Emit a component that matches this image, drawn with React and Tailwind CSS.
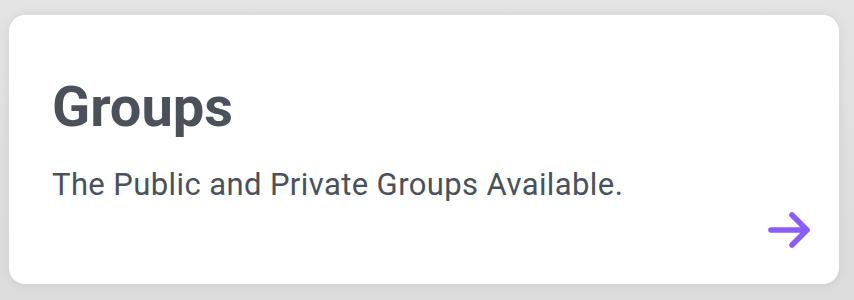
export default function App() {
  return (
    <div className="h-[300px] w-full bg-gradient-to-b from-[#e4e4e4] to-[#dcdcdc] pt-[15px] pl-[9px] pr-[15px] font-['Roboto',sans-serif]">
      <div className="h-[269px] w-[830px] rounded-2xl bg-white shadow-[0_0_12px_rgba(0,0,0,0.08)] flex flex-col pl-[43px] pr-[26px] pt-[64px] pb-[30px]">
        <h1 className="text-[56px] leading-[56px] font-bold text-[#4a515a]">Groups</h1>
        <p className="mt-[34px] text-[31px] leading-[31px] tracking-[0.4px] text-[#4a515a]">The Public and Private Groups Available.</p>
        <div className="mt-auto flex justify-end">
          <svg width="48" height="48" viewBox="0 0 24 24" fill="none" stroke="#8b5cf6" strokeWidth="2.8" strokeLinecap="round" strokeLinejoin="round">
            <path d="M13.5 4.5 21 12m0 0-7.5 7.5M21 12H3" />
          </svg>
        </div>
      </div>
    </div>
  );
}
